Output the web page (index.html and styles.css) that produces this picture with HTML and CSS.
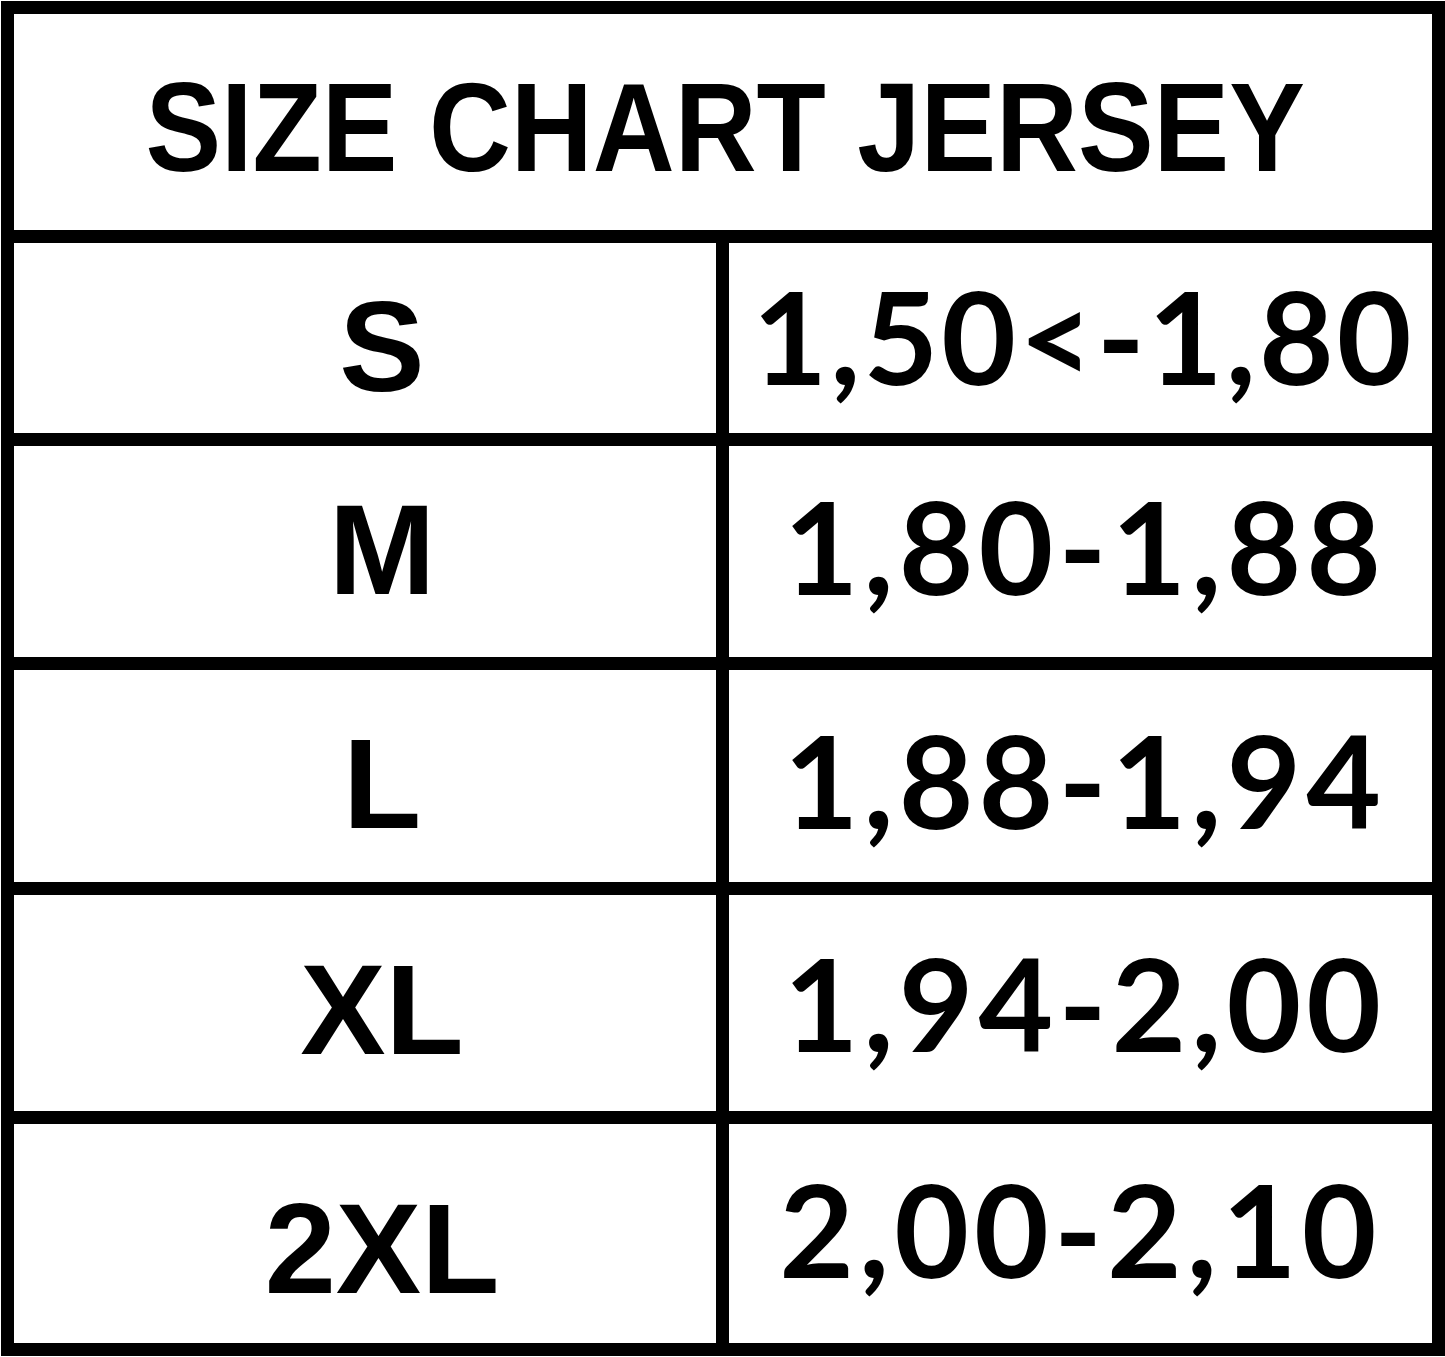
FILE: index.html
```html
<!DOCTYPE html>
<html lang="en">
<head>
<meta charset="utf-8">
<title>Size Chart Jersey</title>
<link rel="stylesheet" href="styles.css">
</head>
<body>
<div class="chart">
  <div class="title"><span class="title-text">SIZE CHART JERSEY</span></div>
  <div class="size r1">S</div><div class="range r1">1,50&lt;-1,80</div>
  <div class="size r2">M</div><div class="range r2">1,80-1,88</div>
  <div class="size r3">L</div><div class="range r3">1,88-1,94</div>
  <div class="size r4">XL</div><div class="range r4">1,94-2,00</div>
  <div class="size r5">2XL</div><div class="range r5">2,00-2,10</div>
</div>
</body>
</html>
```
FILE: styles.css
```css
html, body {
  margin: 0;
  padding: 0;
  background: #ffffff;
}

body {
  padding: 1px 0 0 1px;
}

.chart {
  box-sizing: border-box;
  width: 1444px;
  height: 1355px;
  border: 13px solid #000;
  background: #000;
  display: grid;
  grid-template-columns: 702px 703px;
  grid-template-rows: 216px 190px 211px 212px 216px 219px;
  gap: 13px;
  color: #000;
}

.chart > div {
  background: #fff;
  box-sizing: border-box;
  line-height: 1;
  white-space: nowrap;
  text-align: center;
}

.title {
  grid-column: 1 / span 2;
  font-family: "Liberation Sans", Arial, sans-serif;
  font-weight: 700;
  font-size: 126px;
  padding-top: 51px;
  padding-left: 4px;
}

.title-text {
  display: inline-block;
  transform: scaleX(0.9);
  transform-origin: center;
}

.size {
  font-family: "Liberation Sans", Arial, sans-serif;
  font-weight: 700;
  font-size: 128px;
  padding-left: 34px;
}

.range {
  font-family: "Lato", "Liberation Sans", sans-serif;
  font-weight: 700;
  font-size: 129px;
  font-variant-numeric: tabular-nums;
  letter-spacing: 5px;
  padding-left: 9px;
}

.size.r1 { padding-top: 40px; }
.size.r2 { padding-top: 40px; }
.size.r3 { padding-top: 50px; }
.size.r4 { padding-top: 51px; }
.size.r5 { padding-top: 61px; }

.range.r1 { padding-top: 28px; letter-spacing: 3px; padding-left: 6px; }
.range.r2 { padding-top: 35px; }
.range.r3 { padding-top: 45px; }
.range.r4 { padding-top: 43px; }
.range.r5 { padding-top: 40px; padding-left: 0; }
```
